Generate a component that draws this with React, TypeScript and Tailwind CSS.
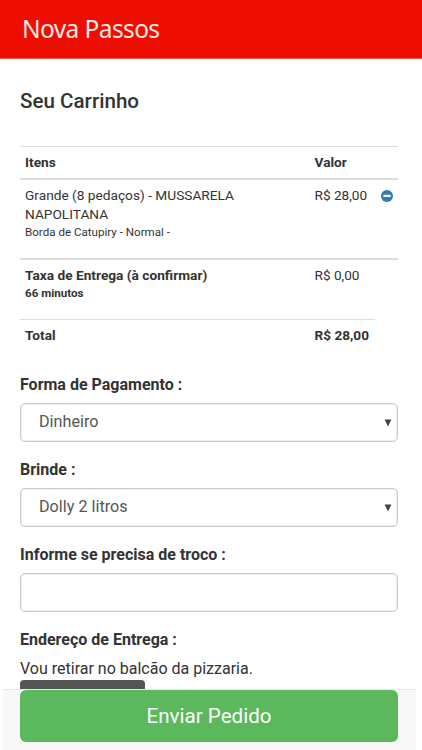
import { ReactNode } from "react";

const selects = [
  { label: "Forma de Pagamento :", value: "Dinheiro" },
  { label: "Brinde :", value: "Dolly 2 litros" },
];

function Label({ children }: { children: ReactNode }) {
  return <label className="block h-7 text-[16px] leading-[19px] font-bold">{children}</label>;
}

function RemoveIcon() {
  return (
    <svg viewBox="0 0 12 12" className="h-3 w-3">
      <circle cx="6" cy="6" r="6" fill="#337ab7" />
      <rect x="2.4" y="4.8" width="7.2" height="2.2" rx="0.4" fill="#fff" />
    </svg>
  );
}

function SelectBox({ value }: { value: string }) {
  return (
    <button className="flex h-[39px] w-full items-center justify-between rounded-[5px] border border-[#ccc] bg-white pr-[5px] pl-[18px] text-left text-[16.2px] text-[#555] shadow-[inset_0_0_0_0.5px_#ddd]">
      <span>{value}</span>
      <svg viewBox="0 0 8 8" className="h-[8px] w-[8px]">
        <path d="M0.6 0.5h6.8L4 7.6z" fill="#444" />
      </svg>
    </button>
  );
}

export default function App() {
  return (
    <div className="flex h-[750px] w-[422px] flex-col overflow-hidden bg-white font-['Roboto',sans-serif] text-[#333]">
      <header className="flex h-[59px] shrink-0 items-center border-b border-[#f0584f] bg-[#ee0d00] pl-[22px]">
        <h1 className="font-['Noto_Sans',sans-serif] text-[24.5px] leading-none font-normal tracking-[-0.6px] text-[#ffe9e7]">
          Nova Passos
        </h1>
      </header>

      <main className="flex-1 overflow-hidden px-5">
        <h2 className="mt-[30px] text-[20.6px] leading-6 font-medium">Seu Carrinho</h2>

        <div className="mt-[33px] w-[378px] text-[13.7px] leading-[19px]">
          <div className="flex h-[32px] border-t border-[#ddd] px-[5px] pt-[6px] font-bold">
            <span className="w-[289.5px]">Itens</span>
            <span>Valor</span>
          </div>

          <div className="flex h-[80px] border-t-2 border-[#ddd] px-[5px] pt-[6px]">
            <div className="w-[289.5px] pr-10">
              <p>Grande (8 pedaços) - MUSSARELA NAPOLITANA</p>
              <p className="text-[11.6px] leading-[16px]">Borda de Catupiry - Normal -</p>
            </div>
            <span className="w-[66px] text-[13.6px]">R$ 28,00</span>
            <button className="flex h-[19px] items-center">
              <RemoveIcon />
            </button>
          </div>

          <div className="flex h-[61px] border-t-2 border-[#ddd] px-[5px] pt-[6px]">
            <div className="w-[289.5px] font-bold">
              <p>Taxa de Entrega (à confirmar)</p>
              <p className="text-[11.6px] leading-[16px]">66 minutos</p>
            </div>
            <span className="text-[13.6px]">R$ 0,00</span>
          </div>

          <div className="flex h-[56px] w-[355px] border-t border-[#ddd] pt-[6px] pl-[5px] font-bold">
            <span className="w-[289.5px]">Total</span>
            <span className="text-[13.6px]">R$ 28,00</span>
          </div>
        </div>

        <form className="w-[378px]">
          {selects.map((item) => (
            <div key={item.label} className="mb-[18px]">
              <Label>{item.label}</Label>
              <SelectBox value={item.value} />
            </div>
          ))}
          <div className="mb-[18px]">
            <Label>Informe se precisa de troco :</Label>
            <input className="block h-[39px] w-full rounded-[5px] border border-[#ccc] bg-white px-[18px] shadow-[inset_0_0_0_0.5px_#ddd]" />
          </div>
          <Label>Endereço de Entrega :</Label>
          <p className="text-[16px] leading-[22px]">Vou retirar no balcão da pizzaria.</p>
          <div className="h-[30px] w-[125px] rounded-[4px] bg-[#555]" />
        </form>
      </main>

      <footer className="mr-[6px] ml-[3px] h-[61px] shrink-0 border-t border-[#e7e7e7] bg-[#f8f8f8] pl-[17px]">
        <button className="h-[52px] w-[378px] rounded-[6px] bg-[#5cb85c] text-[20.6px] text-white">
          Enviar Pedido
        </button>
      </footer>
    </div>
  );
}
